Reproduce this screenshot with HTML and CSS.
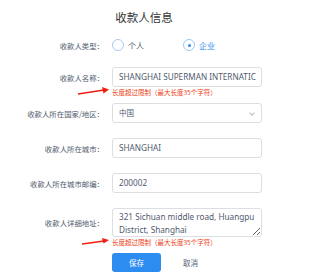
FILE: index.html
```html
<!DOCTYPE html>
<html>
<head>
    <title>收款人信息</title>
    <meta charset="UTF-8" />
    <link rel="stylesheet" href="styles.css">
</head>
<body>
    <div class="page">
        <div class="title">收款人信息</div>

        <div class="field radios">
            <div class="label">收款人类型：</div>
            <div class="control radioGroup">
                <span class="radio"><span class="dot"></span>个人</span>
                <span class="radio checked"><span class="dot"></span>企业</span>
            </div>
        </div>

        <div class="field hasError">
            <div class="label">收款人名称：</div>
            <div class="control"><div class="input">SHANGHAI SUPERMAN INTERNATIC</div></div>
        </div>
        <div class="error">长度超过限制（最大长度35个字符）</div>

        <div class="field">
            <div class="label">收款人所在国家/地区：</div>
            <div class="control">
                <div class="input select">中国<span class="arrow"></span></div>
            </div>
        </div>

        <div class="field">
            <div class="label">收款人所在城市：</div>
            <div class="control"><div class="input">SHANGHAI</div></div>
        </div>

        <div class="field">
            <div class="label">收款人所在城市邮编：</div>
            <div class="control"><div class="input">200002</div></div>
        </div>

        <div class="field hasError">
            <div class="label">收款人详细地址：</div>
            <div class="control"><textarea class="textarea">321 Sichuan middle road, Huangpu
District, Shanghai</textarea></div>
        </div>
        <div class="error">长度超过限制（最大长度35个字符）</div>

        <div class="buttons">
            <div class="btn primary">保存</div>
            <div class="btn">取消</div>
        </div>

        <svg class="pointer first" width="34" height="10" viewBox="0 0 34 10">
            <path d="M0 8 L26 4" stroke="#f01e14" stroke-width="1.4" fill="none"/>
            <path d="M24 1 L31 3.5 L25.5 7.5 Z" fill="#f01e14"/>
        </svg>
        <svg class="pointer second" width="34" height="10" viewBox="0 0 34 10">
            <path d="M0 8 L22 5" stroke="#f01e14" stroke-width="1.4" fill="none"/>
            <path d="M20 2 L27 4 L21.5 7.5 Z" fill="#f01e14"/>
        </svg>
    </div>
</body>
</html>
```

FILE: styles.css
```css
body
{
    margin: 0;
    background-color: #fff;
    font-family: "Noto Sans", "Noto Sans CJK SC", sans-serif;
    color: #515a6e;
}

.page
{
    position: relative;
    width: 314px;
    height: 280px;
}

.title
{
    height: 34px;
    line-height: 34px;
    text-align: center;
    font-size: 11.5px;
    color: #333;
    padding-right: 26px;
    font-family: "Noto Sans CJK SC", sans-serif;
}

.field
{
    display: flex;
    align-items: center;
    margin-bottom: 15px;
}

.field.radios
{
    height: 20px;
    margin-top: 1px;
    margin-bottom: 12px;
}

.field.hasError
{
    margin-bottom: 0;
}

.label
{
    width: 104px;
    text-align: right;
    font-size: 7.4px;
    font-family: "Noto Sans CJK SC", sans-serif;
    color: #515a6e;
    flex-shrink: 0;
}

.control
{
    margin-left: 8px;
    width: 150px;
}

.radioGroup
{
    display: flex;
    align-items: center;
}

.radio
{
    display: flex;
    align-items: center;
    font-size: 8px;
    font-family: "Noto Sans CJK SC", sans-serif;
    width: 71px;
}

.radio .dot
{
    width: 10px;
    height: 10px;
    border: 1px solid #a9c9f0;
    border-radius: 50%;
    margin-right: 4px;
    position: relative;
}

.radio.checked
{
    color: #2d8cf0;
}

.radio.checked .dot
{
    border-color: #9ec6f5;
}

.radio.checked .dot::after
{
    content: "";
    position: absolute;
    left: 3.5px;
    top: 3.5px;
    width: 3px;
    height: 3px;
    border-radius: 50%;
    background-color: #2d8cf0;
}

.input
{
    box-sizing: border-box;
    height: 20px;
    line-height: 18px;
    border: 1px solid #dcdee2;
    border-radius: 3px;
    padding: 0 6px;
    font-size: 8.2px;
    color: #515a6e;
    white-space: nowrap;
    overflow: hidden;
}

.select
{
    position: relative;
    font-family: "Noto Sans CJK SC", sans-serif;
    font-size: 7.5px;
}

.select .arrow
{
    position: absolute;
    right: 7px;
    top: 7px;
    width: 3px;
    height: 3px;
    border-right: 1px solid #b8bcc4;
    border-bottom: 1px solid #b8bcc4;
    transform: rotate(45deg);
}

.textarea
{
    display: block;
    box-sizing: border-box;
    width: 150px;
    height: 29px;
    margin: 0;
    border: 1px solid #dcdee2;
    border-radius: 3px;
    padding: 1px 6px;
    font-family: "Noto Sans", sans-serif;
    font-size: 8.2px;
    line-height: 13px;
    color: #515a6e;
    overflow: hidden;
}

.error
{
    margin-left: 112px;
    height: 11px;
    line-height: 11px;
    font-size: 6.5px;
    color: #ed4014;
    font-family: "Noto Sans CJK SC", sans-serif;
    margin-bottom: 5px;
}

.buttons
{
    display: flex;
    margin-left: 112px;
    gap: 5px;
}

.btn
{
    width: 49px;
    height: 19px;
    line-height: 19px;
    text-align: center;
    font-size: 7.5px;
    font-family: "Noto Sans CJK SC", sans-serif;
    border-radius: 3px;
    color: #515a6e;
}

.btn.primary
{
    background-color: #2d8cf0;
    color: #fff;
}

.pointer
{
    position: absolute;
}

.pointer.first
{
    left: 78px;
    top: 86px;
}

.pointer.second
{
    left: 82px;
    top: 236px;
}
```
